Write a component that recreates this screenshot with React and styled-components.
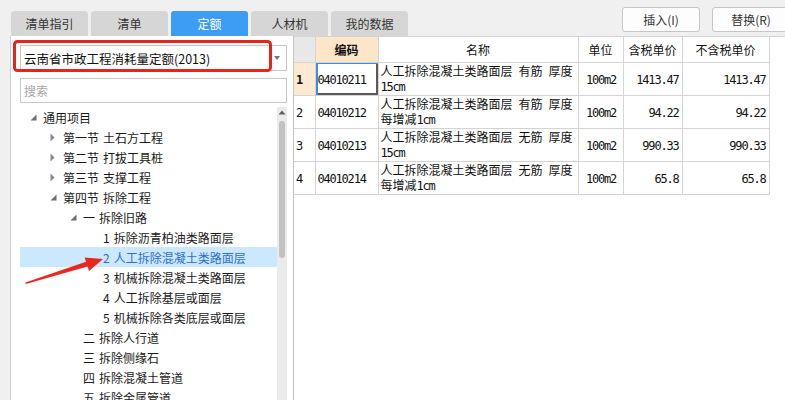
import React from 'react';
import styled, { createGlobalStyle } from 'styled-components';

const GlobalStyle = createGlobalStyle`
  html, body {
    margin: 0;
    padding: 0;
    background: #f0f0f0;
  }
  body {
    font-family: "Noto Sans CJK SC", "Microsoft YaHei", sans-serif;
    font-size: 12px;
    color: #222;
  }
`;

const Page = styled.div`
  position: relative;
  width: 785px;
  height: 400px;
  overflow: hidden;
  display: flex;
  flex-direction: column;
  background: #f0f0f0;
`;

const TopBar = styled.div`
  height: 36px;
  flex: none;
  display: flex;
  align-items: flex-end;
  padding-left: 11px;
  box-sizing: border-box;
`;

const Tabs = styled.div`
  display: flex;
  gap: 3px;
`;

const Tab = styled.div`
  width: 77px;
  height: 25px;
  line-height: 25px;
  text-align: center;
  border-radius: 3px 3px 0 0;
  background: ${p => (p.$active ? '#3d9cf4' : '#d6d6d6')};
  color: ${p => (p.$active ? '#fff' : '#333')};
`;

const Actions = styled.div`
  margin-left: auto;
  margin-right: -5px;
  align-self: flex-start;
  margin-top: 7px;
  display: flex;
  gap: 12px;
`;

const ActionButton = styled.button`
  width: 78px;
  height: 25px;
  padding: 0;
  background: #fdfdfd;
  border: 1px solid #c6c6c6;
  border-radius: 3px;
  font-family: inherit;
  font-size: 12px;
  color: #333;
`;

const Body = styled.div`
  flex: 1;
  min-height: 0;
  display: flex;
`;

const LeftPanel = styled.div`
  width: 283px;
  flex: none;
  margin-left: 10px;
  box-sizing: border-box;
  border-left: 1px solid #cfcfcf;
  background: #fff;
  display: flex;
  flex-direction: column;
  padding: 9px 6px 0 9px;
`;

const Select = styled.div`
  height: 26px;
  box-sizing: border-box;
  border: 1px solid #c8c8c8;
  display: flex;
  align-items: center;
  padding: 0 6px 0 3px;
  font-size: 12.5px;
  color: #111;
`;

const SelectText = styled.span`
  flex: 1;
`;

const Caret = styled.span`
  width: 0;
  height: 0;
  border-left: 3px solid transparent;
  border-right: 3px solid transparent;
  border-top: 4px solid #777;
`;

const Search = styled.div`
  margin-top: 7px;
  height: 25px;
  box-sizing: border-box;
  border: 1px solid #c8c8c8;
  display: flex;
  align-items: center;
  padding-left: 3px;
  color: #a8a8a8;
`;

const TreeArea = styled.div`
  margin-top: 4px;
  flex: 1;
  min-height: 0;
  display: flex;
  overflow: hidden;
`;

const TreeList = styled.div`
  width: 257px;
  flex: none;
`;

const TreeRow = styled.div`
  height: 20px;
  display: flex;
  align-items: center;
  padding-left: ${p => 10 + p.$level * 20}px;
  background: ${p => (p.$selected ? '#cce8ff' : 'transparent')};
  color: ${p => (p.$selected ? '#2b6fce' : '#1a1a1a')};
  white-space: pre;
`;

const Toggle = styled.span`
  width: 13px;
  flex: none;
  display: flex;
  align-items: center;
`;

const ScrollTrack = styled.div`
  width: 10px;
  flex: none;
  background: #ebebeb;
  display: flex;
  flex-direction: column;
  align-items: center;
  padding-top: 3px;
`;

const ScrollThumb = styled.div`
  margin-top: 6px;
  width: 6px;
  height: 137px;
  border-radius: 3px;
  background: #c2c2c2;
`;

const RightPanel = styled.div`
  flex: 1;
  background: #fff;
  border-left: 1px solid #c4c4c4;
  border-top: 1px solid #d4d4d4;
`;

const Grid = styled.table`
  border-collapse: collapse;
  table-layout: fixed;
  width: 475px;
  font-size: 12px;
  color: #111;
`;

const HeadCell = styled.th`
  height: 25px;
  padding: 0;
  border: 1px solid #d4d4d4;
  border-top: none;
  font-weight: ${p => (p.$bold ? 700 : 400)};
  background: ${p => p.$bg || '#fff'};
  &:first-child {
    border-left: none;
  }
`;

const Cell = styled.td`
  height: 32px;
  padding: 0 ${p => (p.$align === 'right' ? '3px' : '1px')} 0 2px;
  border: 1px solid #d4d4d4;
  text-align: ${p => p.$align || 'left'};
  vertical-align: middle;
  line-height: 15px;
  white-space: pre-wrap;
  background: ${p => p.$bg || '#fff'};
  font-weight: ${p => (p.$bold ? 700 : 400)};
  box-shadow: ${p =>
    p.$focus
      ? 'inset 2px 0 0 #3c8de0, inset 0 1px 0 #3c8de0, inset -2px 0 0 #5a5a5a, inset 0 -2px 0 #5a5a5a'
      : 'none'};
  &:first-child {
    border-left: none;
  }
`;

const Num = styled.span`
  font-family: "DejaVu Sans Mono", "Liberation Mono", monospace;
  font-size: 12px;
  letter-spacing: -1.2px;
`;

const Overlay = styled.svg`
  position: absolute;
  left: 0;
  top: 0;
  pointer-events: none;
`;

const tabs = ['清单指引', '清单', '定额', '人材机', '我的数据'];

// U+2004 gives the wider gap the original font uses between words
const S = '\u2004';
// U+2002 is a half-width space, as in the table's font
const W = '\u2002';

const tree = [
  { level: 0, text: '通用项目', toggle: 'open' },
  { level: 1, text: `第一节${S}土石方工程`, toggle: 'closed' },
  { level: 1, text: `第二节${S}打拔工具桩`, toggle: 'closed' },
  { level: 1, text: `第三节${S}支撑工程`, toggle: 'closed' },
  { level: 1, text: `第四节${S}拆除工程`, toggle: 'open' },
  { level: 2, text: `一${S}拆除旧路`, toggle: 'open' },
  { level: 3, text: `1${S}拆除沥青柏油类路面层` },
  { level: 3, text: `2${S}人工拆除混凝土类路面层`, selected: true },
  { level: 3, text: `3${S}机械拆除混凝土类路面层` },
  { level: 3, text: `4${S}人工拆除基层或面层` },
  { level: 3, text: `5${S}机械拆除各类底层或面层` },
  { level: 2, text: `二${S}拆除人行道` },
  { level: 2, text: `三${S}拆除侧缘石` },
  { level: 2, text: `四${S}拆除混凝土管道` },
  { level: 2, text: `五${S}拆除金属管道` },
];

const rows = [
  { code: '04010211', name: `人工拆除混凝土类路面层${W}有筋${W}厚度`, sub: ['', '15cm'], price: '1413.47' },
  { code: '04010212', name: `人工拆除混凝土类路面层${W}有筋${W}厚度`, sub: ['每增减', '1cm'], price: '94.22' },
  { code: '04010213', name: `人工拆除混凝土类路面层${W}无筋${W}厚度`, sub: ['', '15cm'], price: '990.33' },
  { code: '04010214', name: `人工拆除混凝土类路面层${W}无筋${W}厚度`, sub: ['每增减', '1cm'], price: '65.8' },
];

function ToggleIcon({ type }) {
  if (type === 'open') {
    return (
      <svg width="7" height="7" viewBox="0 0 7 7">
        <polygon points="6.5,0.5 6.5,6.5 0.5,6.5" fill="#6f6f6f" />
      </svg>
    );
  }
  if (type === 'closed') {
    return (
      <svg width="5" height="9" viewBox="0 0 5 9">
        <polygon points="0.5,0.5 4.5,4.5 0.5,8.5" fill="#8a8a8a" />
      </svg>
    );
  }
  return null;
}

export default function App() {
  return (
    <Page>
      <GlobalStyle />
      <TopBar>
        <Tabs>
          {tabs.map(t => (
            <Tab key={t} $active={t === '定额'}>{t}</Tab>
          ))}
        </Tabs>
        <Actions>
          <ActionButton>插入(I)</ActionButton>
          <ActionButton>替换(R)</ActionButton>
        </Actions>
      </TopBar>

      <Body>
        <LeftPanel>
          <Select>
            <SelectText>云南省市政工程消耗量定额(2013)</SelectText>
            <Caret />
          </Select>
          <Search>搜索</Search>
          <TreeArea>
            <TreeList>
              {tree.map(item => (
                <TreeRow key={item.text} $level={item.level} $selected={item.selected}>
                  <Toggle>
                    <ToggleIcon type={item.toggle} />
                  </Toggle>
                  {item.text}
                </TreeRow>
              ))}
            </TreeList>
            <ScrollTrack>
              <svg width="8" height="5" viewBox="0 0 8 5">
                <polygon points="0.5,4.5 4,0.5 7.5,4.5" fill="#606060" />
              </svg>
              <ScrollThumb />
            </ScrollTrack>
          </TreeArea>
        </LeftPanel>

        <RightPanel>
          <Grid>
            <colgroup>
              <col style={{ width: 21 }} />
              <col style={{ width: 63 }} />
              <col style={{ width: 200 }} />
              <col style={{ width: 45 }} />
              <col style={{ width: 59 }} />
              <col style={{ width: 87 }} />
            </colgroup>
            <thead>
              <tr>
                <HeadCell $bg="#e8e8e8" />
                <HeadCell $bg="#fde6c8" $bold>编码</HeadCell>
                <HeadCell>名称</HeadCell>
                <HeadCell>单位</HeadCell>
                <HeadCell>含税单价</HeadCell>
                <HeadCell>不含税单价</HeadCell>
              </tr>
            </thead>
            <tbody>
              {rows.map((r, i) => (
                <tr key={r.code}>
                  <Cell $bg={i === 0 ? '#fde9cf' : '#fff'} $bold={i === 0}>
                    <Num>{i + 1}</Num>
                  </Cell>
                  <Cell $focus={i === 0}>
                    <Num>{r.code}</Num>
                  </Cell>
                  <Cell>
                    {r.name}
                    <br />
                    {r.sub[0]}
                    <Num>{r.sub[1]}</Num>
                  </Cell>
                  <Cell $align="center">
                    <Num>100m2</Num>
                  </Cell>
                  <Cell $align="right">
                    <Num>{r.price}</Num>
                  </Cell>
                  <Cell $align="right">
                    <Num>{r.price}</Num>
                  </Cell>
                </tr>
              ))}
            </tbody>
          </Grid>
        </RightPanel>
      </Body>

      <Overlay width="785" height="400" viewBox="0 0 785 400">
        <rect x="14.5" y="41.5" width="256" height="29" rx="3" fill="none" stroke="#e8231b" strokeWidth="3" />
        <polygon
          points="25.8,284 87.6,266.6 89,271 103,259 84.6,257.4 86,261.8 25.4,282.4"
          fill="#e8281e"
        />
      </Overlay>
    </Page>
  );
}
